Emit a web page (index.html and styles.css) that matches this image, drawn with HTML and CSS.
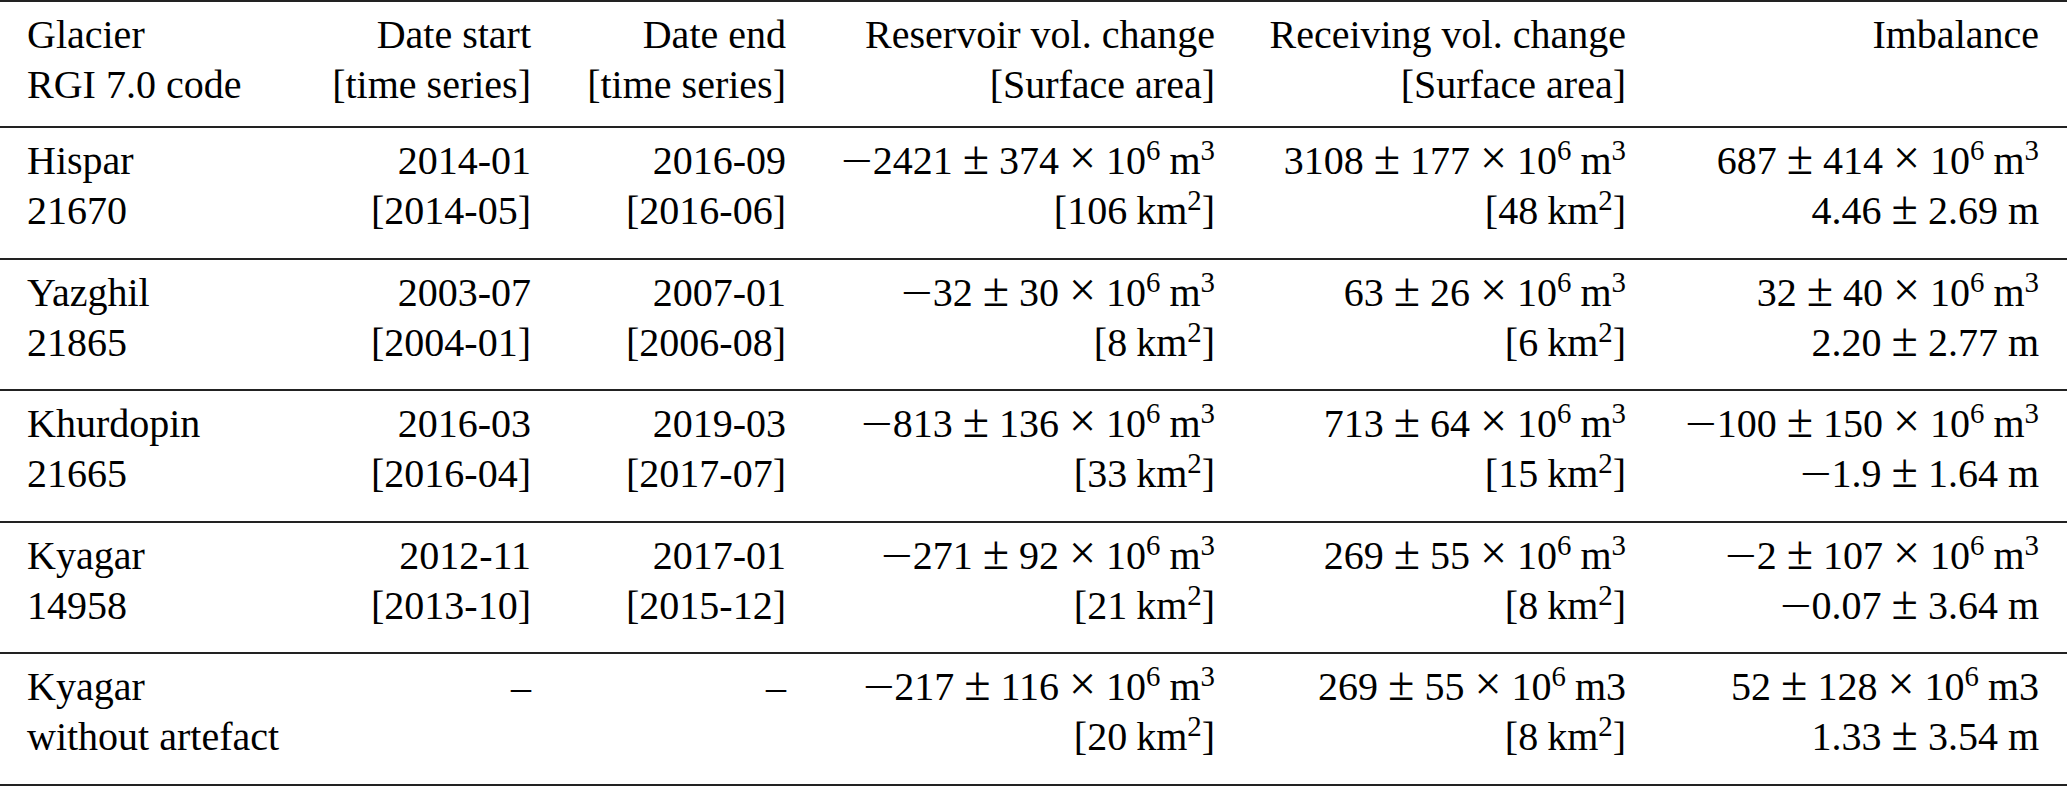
FILE: index.html
```html
<!DOCTYPE html>
<html lang="en">
<head>
    <meta charset="UTF-8">
    <meta name="viewport" content="width=device-width, initial-scale=1.0">
    <title>Glacier volume change</title>
    <link rel="stylesheet" href="styles.css">
</head>
<body>
    <table class="surge-table">
        <colgroup>
            <col class="col-name">
            <col class="col-start">
            <col class="col-end">
            <col class="col-res">
            <col class="col-rec">
            <col class="col-imb">
        </colgroup>
        <thead>
            <tr>
                <th>Glacier<br>RGI 7.0 code</th>
                <th>Date start<br>[time series]</th>
                <th>Date end<br>[time series]</th>
                <th>Reservoir vol. change<br>[Surface area]</th>
                <th>Receiving vol. change<br>[Surface area]</th>
                <th>Imbalance</th>
            </tr>
        </thead>
        <tbody>
            <tr>
                <td>Hispar<br>21670</td>
                <td>2014-01<br>[2014-05]</td>
                <td>2016-09<br>[2016-06]</td>
                <td><span class="neg">&minus;</span>2421<span class="op">±</span>374<span class="op">×</span>10<sup>6</sup><span class="unit">m<sup>3</sup></span><br>[106<span class="unit">km<sup>2</sup></span>]</td>
                <td>3108<span class="op">±</span>177<span class="op">×</span>10<sup>6</sup><span class="unit">m<sup>3</sup></span><br>[48<span class="unit">km<sup>2</sup></span>]</td>
                <td>687<span class="op">±</span>414<span class="op">×</span>10<sup>6</sup><span class="unit">m<sup>3</sup></span><br>4.46<span class="op">±</span>2.69<span class="unit unit-m">m</span></td>
            </tr>
            <tr>
                <td>Yazghil<br>21865</td>
                <td>2003-07<br>[2004-01]</td>
                <td>2007-01<br>[2006-08]</td>
                <td><span class="neg">&minus;</span>32<span class="op">±</span>30<span class="op">×</span>10<sup>6</sup><span class="unit">m<sup>3</sup></span><br>[8<span class="unit">km<sup>2</sup></span>]</td>
                <td>63<span class="op">±</span>26<span class="op">×</span>10<sup>6</sup><span class="unit">m<sup>3</sup></span><br>[6<span class="unit">km<sup>2</sup></span>]</td>
                <td>32<span class="op">±</span>40<span class="op">×</span>10<sup>6</sup><span class="unit">m<sup>3</sup></span><br>2.20<span class="op">±</span>2.77<span class="unit unit-m">m</span></td>
            </tr>
            <tr>
                <td>Khurdopin<br>21665</td>
                <td>2016-03<br>[2016-04]</td>
                <td>2019-03<br>[2017-07]</td>
                <td><span class="neg">&minus;</span>813<span class="op">±</span>136<span class="op">×</span>10<sup>6</sup><span class="unit">m<sup>3</sup></span><br>[33<span class="unit">km<sup>2</sup></span>]</td>
                <td>713<span class="op">±</span>64<span class="op">×</span>10<sup>6</sup><span class="unit">m<sup>3</sup></span><br>[15<span class="unit">km<sup>2</sup></span>]</td>
                <td><span class="neg">&minus;</span>100<span class="op">±</span>150<span class="op">×</span>10<sup>6</sup><span class="unit">m<sup>3</sup></span><br><span class="neg">&minus;</span>1.9<span class="op">±</span>1.64<span class="unit unit-m">m</span></td>
            </tr>
            <tr>
                <td>Kyagar<br>14958</td>
                <td>2012-11<br>[2013-10]</td>
                <td>2017-01<br>[2015-12]</td>
                <td><span class="neg">&minus;</span>271<span class="op">±</span>92<span class="op">×</span>10<sup>6</sup><span class="unit">m<sup>3</sup></span><br>[21<span class="unit">km<sup>2</sup></span>]</td>
                <td>269<span class="op">±</span>55<span class="op">×</span>10<sup>6</sup><span class="unit">m<sup>3</sup></span><br>[8<span class="unit">km<sup>2</sup></span>]</td>
                <td><span class="neg">&minus;</span>2<span class="op">±</span>107<span class="op">×</span>10<sup>6</sup><span class="unit">m<sup>3</sup></span><br><span class="neg">&minus;</span>0.07<span class="op">±</span>3.64<span class="unit unit-m">m</span></td>
            </tr>
            <tr>
                <td>Kyagar<br>without artefact</td>
                <td>&ndash;</td>
                <td>&ndash;</td>
                <td><span class="neg">&minus;</span>217<span class="op">±</span>116<span class="op">×</span>10<sup>6</sup><span class="unit">m<sup>3</sup></span><br>[20<span class="unit">km<sup>2</sup></span>]</td>
                <td>269<span class="op">±</span>55<span class="op">×</span>10<sup>6</sup><span class="unit">m3</span><br>[8<span class="unit">km<sup>2</sup></span>]</td>
                <td>52<span class="op">±</span>128<span class="op">×</span>10<sup>6</sup><span class="unit">m3</span><br>1.33<span class="op">±</span>3.54<span class="unit unit-m">m</span></td>
            </tr>
        </tbody>
    </table>
</body>
</html>
```

FILE: styles.css
```css
body {
    margin: 0;
    font-family: "Liberation Serif", "Times New Roman", serif;
    background-color: white;
    color: #000;
}

.surge-table {
    width: 100%;
    table-layout: fixed;
    border-collapse: separate;
    border-spacing: 0;
    font-size: 40px;
    line-height: 50px;
}

/* column widths, so the right edges land under each header */
.col-name { width: 330px; }
.col-start { width: 229px; }
.col-end { width: 255px; }
.col-res { width: 429px; }
.col-rec { width: 411px; }
.col-imb { width: 413px; }

th,
td {
    font-weight: normal;
    text-align: right;
    vertical-align: top;
    white-space: nowrap;
    padding: 8px 28px 21.6px 0;
    border-bottom: 2px solid #222;
}

th {
    border-top: 2px solid #222;
    padding-bottom: 16px;
}

th:first-child,
td:first-child {
    text-align: left;
    padding-left: 27px;
}

/* math operators: a bit larger than the text glyphs, with medium space */
.op {
    font-size: 1.2em;
    line-height: 0;
    margin: 0 10px;
}

.unit {
    margin-left: 9px;
}

.unit-m {
    margin-left: 10px;
}

/* the math minus is longer than the text one */
.neg {
    display: inline-block;
    transform: scaleX(1.4);
    transform-origin: right center;
}

sup {
    font-size: 0.72em;
    line-height: 0;
    vertical-align: 0.48em;
}
```
